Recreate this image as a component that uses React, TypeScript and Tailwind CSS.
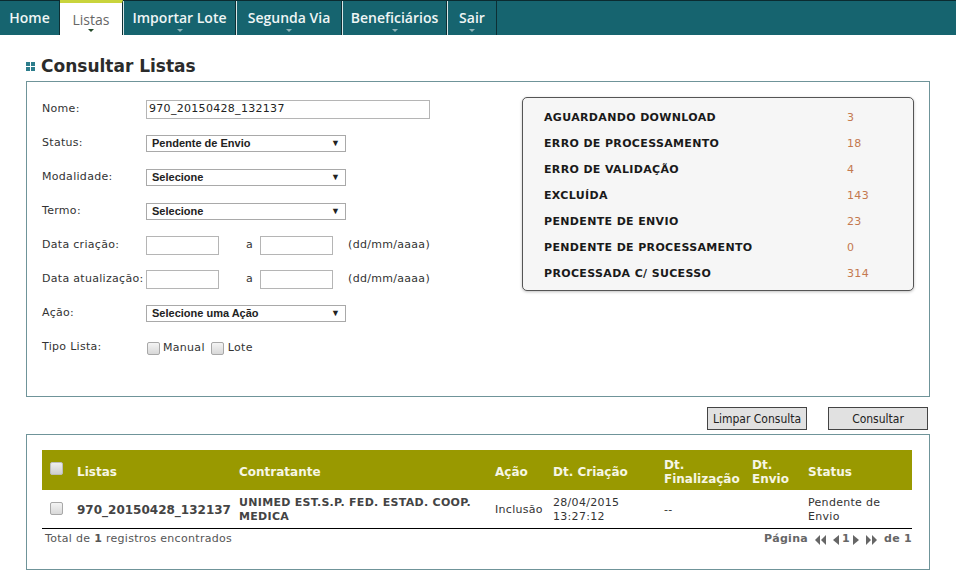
import React from 'react';

const tabs = [
    { label: 'Home', w: 'w-[60px]', caret: false },
    { label: 'Listas', w: 'w-[63px]', caret: true, active: true },
    { label: 'Importar Lote', w: 'w-[113px]', caret: true },
    { label: 'Segunda Via', w: 'w-[106px]', caret: true },
    { label: 'Beneficiários', w: 'w-[105px]', caret: true },
    { label: 'Sair', w: 'w-[50px]', caret: true },
];

const stats = [
    ['AGUARDANDO DOWNLOAD', '3'],
    ['ERRO DE PROCESSAMENTO', '18'],
    ['ERRO DE VALIDAÇÃO', '4'],
    ['EXCLUÍDA', '143'],
    ['PENDENTE DE ENVIO', '23'],
    ['PENDENTE DE PROCESSAMENTO', '0'],
    ['PROCESSADA C/ SUCESSO', '314'],
];

const Check = () => (
    <span className="inline-block w-[13px] h-[13px] rounded-[2px] border border-[#a8a8a8] bg-gradient-to-b from-[#f4f4f4] to-[#d8d8d8] align-middle"></span>
);

const Select = ({ value }: { value: string }) => (
    <div className="w-[200px] h-[17px] border border-[#a9a9a9] bg-white flex items-center justify-between pl-[5px] pr-[5px] font-['Liberation_Sans',sans-serif] text-[11px] font-bold text-[#222] tracking-normal">
        <span>{value}</span>
        <span className="text-[9px] leading-none">▼</span>
    </div>
);

const TextBox = ({ w, value }: { w: string; value?: string }) => (
    <div className={`${w} h-[19px] border border-[#b5b5b5] bg-white px-[2px] flex items-center text-[11px] text-[#222]`}>{value}</div>
);

const Row = ({ label, children }: { label: string; children?: React.ReactNode }) => (
    <div className="flex items-center h-[34px]">
        <div className="w-[104px] shrink-0">{label}</div>
        {children}
    </div>
);

const Tri = ({ dir, double }: { dir: 'l' | 'r'; double?: boolean }) => (
    <svg width={double ? 11 : 6} height="10" viewBox={double ? '0 0 11 10' : '0 0 6 10'} className="inline-block">
        {dir === 'l' ? (
            double ? (
                <>
                    <polygon points="5,0 0,5 5,10" fill="#666" />
                    <polygon points="11,0 6,5 11,10" fill="#666" />
                </>
            ) : (
                <polygon points="6,0 0,5 6,10" fill="#666" />
            )
        ) : double ? (
            <>
                <polygon points="0,0 5,5 0,10" fill="#666" />
                <polygon points="6,0 11,5 6,10" fill="#666" />
            </>
        ) : (
            <polygon points="0,0 6,5 0,10" fill="#666" />
        )}
    </svg>
);

export default function App() {
    return (
        <div className="w-[956px] h-[579px] bg-white font-['DejaVu_Sans',sans-serif] text-[#333] overflow-hidden">
            {/* top menu */}
            <nav className="h-[35px] bg-[#16646f] border-t border-[#0b2b30] flex">
                {tabs.map(t => (
                    <div
                        key={t.label}
                        className={`${t.w} relative flex justify-center pt-[8px] border-r border-[#0d2f34] font-['Open_Sans',sans-serif] text-[14px] ${
                            t.active
                                ? 'bg-white text-[#666] border-t-[3px] border-t-[#c9d43c] -mt-px pt-[6px]'
                                : 'text-[#eef5f5] font-semibold border-l border-l-[#d9e6e7]'
                        } ${t.label === 'Home' ? 'border-l-0' : ''}`}
                    >
                        <span className="leading-[18px]">{t.label}</span>
                        {t.caret && (
                            <span
                                className={`absolute left-1/2 -translate-x-1/2 bottom-[3px] w-0 h-0 border-l-[3px] border-r-[3px] border-t-[3px] border-l-transparent border-r-transparent ${
                                    t.active ? 'border-t-[#244a2a]' : 'border-t-[#8fb3b8]'
                                }`}
                            ></span>
                        )}
                    </div>
                ))}
            </nav>

            {/* title */}
            <div className="flex items-center pl-[26px] pt-[17px] h-[46px]">
                <div className="grid grid-cols-2 gap-px w-[9px] mr-[6px]">
                    <span className="w-[4px] h-[4px] bg-[#2d7d8c]"></span>
                    <span className="w-[4px] h-[4px] bg-[#2d7d8c]"></span>
                    <span className="w-[4px] h-[4px] bg-[#2d7d8c]"></span>
                    <span className="w-[4px] h-[4px] bg-[#2d7d8c]"></span>
                </div>
                <h1 className="text-[17px] font-bold text-[#2b2b2b] leading-none">Consultar Listas</h1>
            </div>

            {/* filter panel */}
            <div className="ml-[26px] w-[904px] h-[316px] border border-[#6f9499] flex justify-between">
                <div className="pl-[15px] pt-[10px] text-[11px] tracking-[0.3px] text-[#333]">
                    <Row label="Nome:">
                        <TextBox w="w-[284px]" value="970_20150428_132137" />
                    </Row>
                    <Row label="Status:">
                        <Select value="Pendente de Envio" />
                    </Row>
                    <Row label="Modalidade:">
                        <Select value="Selecione" />
                    </Row>
                    <Row label="Termo:">
                        <Select value="Selecione" />
                    </Row>
                    <Row label="Data criação:">
                        <TextBox w="w-[73px]" />
                        <span className="ml-[27px] mr-[7px]">a</span>
                        <TextBox w="w-[73px]" />
                        <span className="ml-[15px]">(dd/mm/aaaa)</span>
                    </Row>
                    <Row label="Data atualização:">
                        <TextBox w="w-[73px]" />
                        <span className="ml-[27px] mr-[7px]">a</span>
                        <TextBox w="w-[73px]" />
                        <span className="ml-[15px]">(dd/mm/aaaa)</span>
                    </Row>
                    <Row label="Ação:">
                        <Select value="Selecione uma Ação" />
                    </Row>
                    <Row label="Tipo Lista:">
                        <div className="flex items-center mt-[3px] ml-[1px]">
                            <Check />
                            <span className="ml-[3px] mr-[6px]">Manual</span>
                            <Check />
                            <span className="ml-[4px]">Lote</span>
                        </div>
                    </Row>
                </div>

                <div className="mt-[15px] mr-[15px] w-[392px] h-[194px] bg-[#f6f6f6] border border-[#555] rounded-[5px] shadow-[0_1px_3px_rgba(0,0,0,0.25)] pl-[21px] pt-[7px]">
                    {stats.map(([name, n]) => (
                        <div key={name} className="flex items-center h-[26px] text-[11px] tracking-[0.35px]">
                            <span className="w-[303px] font-bold text-[#1a1a1a]">{name}</span>
                            <span className="text-[#c4794f]">{n}</span>
                        </div>
                    ))}
                </div>
            </div>

            {/* buttons */}
            <div className="flex justify-end gap-[21px] w-[928px] mt-[10px]">
                <button className="w-[100px] h-[23px] bg-[#e1e1e1] border border-[#444] font-['DejaVu_Sans_Condensed','DejaVu_Sans',sans-serif] text-[12px] text-[#222] leading-none">Limpar Consulta</button>
                <button className="w-[100px] h-[23px] bg-[#e1e1e1] border border-[#444] font-['DejaVu_Sans_Condensed','DejaVu_Sans',sans-serif] text-[12px] text-[#222] leading-none">Consultar</button>
            </div>

            {/* result panel */}
            <div className="ml-[26px] mt-[4px] w-[904px] h-[136px] border border-[#6f9499] pt-[15px] pl-[15px] pr-[16px]">
                <table className="w-[870px] table-fixed border-collapse">
                    <colgroup>
                        <col className="w-[35px]" />
                        <col className="w-[162px]" />
                        <col className="w-[256px]" />
                        <col className="w-[58px]" />
                        <col className="w-[111px]" />
                        <col className="w-[88px]" />
                        <col className="w-[56px]" />
                        <col className="w-[104px]" />
                    </colgroup>
                    <thead>
                        <tr className="h-[40px] bg-[#999900] text-[#f6f6e4] text-[12px] font-bold text-left leading-[14px]">
                            <th className="pl-[8px] font-bold">
                                <span className="inline-block w-[13px] h-[13px] rounded-[2px] border border-[#bdbdbd] bg-gradient-to-b from-[#eeeeee] to-[#cfcfcf] -mt-[4px] align-middle"></span>
                            </th>
                            <th className="font-bold pt-[3px]">Listas</th>
                            <th className="font-bold pt-[3px]">Contratante</th>
                            <th className="font-bold pt-[3px]">Ação</th>
                            <th className="font-bold pt-[3px]">Dt. Criação</th>
                            <th className="font-bold pt-[3px]">Dt. Finalização</th>
                            <th className="font-bold pt-[3px]">Dt. Envio</th>
                            <th className="font-bold pt-[3px]">Status</th>
                        </tr>
                    </thead>
                    <tbody>
                        <tr className="h-[38px] border-b border-black text-[11px] leading-[14px] tracking-[0.3px] text-[#333] align-middle">
                            <td className="pl-[8px]">
                                <Check />
                            </td>
                            <td className="text-[12px] font-bold text-[#444] tracking-normal pt-[2px]">970_20150428_132137</td>
                            <td className="font-bold text-[#444] pt-[2px]">UNIMED EST.S.P. FED. ESTAD. COOP. MEDICA</td>
                            <td className="pt-[2px]">Inclusão</td>
                            <td className="pt-[2px]">28/04/2015 13:27:12</td>
                            <td className="pt-[2px]">--</td>
                            <td></td>
                            <td className="pt-[2px]">Pendente de Envio</td>
                        </tr>
                    </tbody>
                </table>
                <div className="w-[870px] flex justify-between items-center h-[20px] mt-[1px] text-[11px] tracking-[0.3px]">
                    <span className="pl-[3px] text-[#555]">
                        Total de <b>1</b> registros encontrados
                    </span>
                    <span className="flex items-center gap-[7px] font-bold text-[#666] text-[11px]">
                        Página
                        <Tri dir="l" double />
                        <span className="flex items-center gap-[3px]">
                            <Tri dir="l" />
                            1
                            <Tri dir="r" />
                        </span>
                        <Tri dir="r" double />
                        de 1
                    </span>
                </div>
            </div>
        </div>
    );
}
